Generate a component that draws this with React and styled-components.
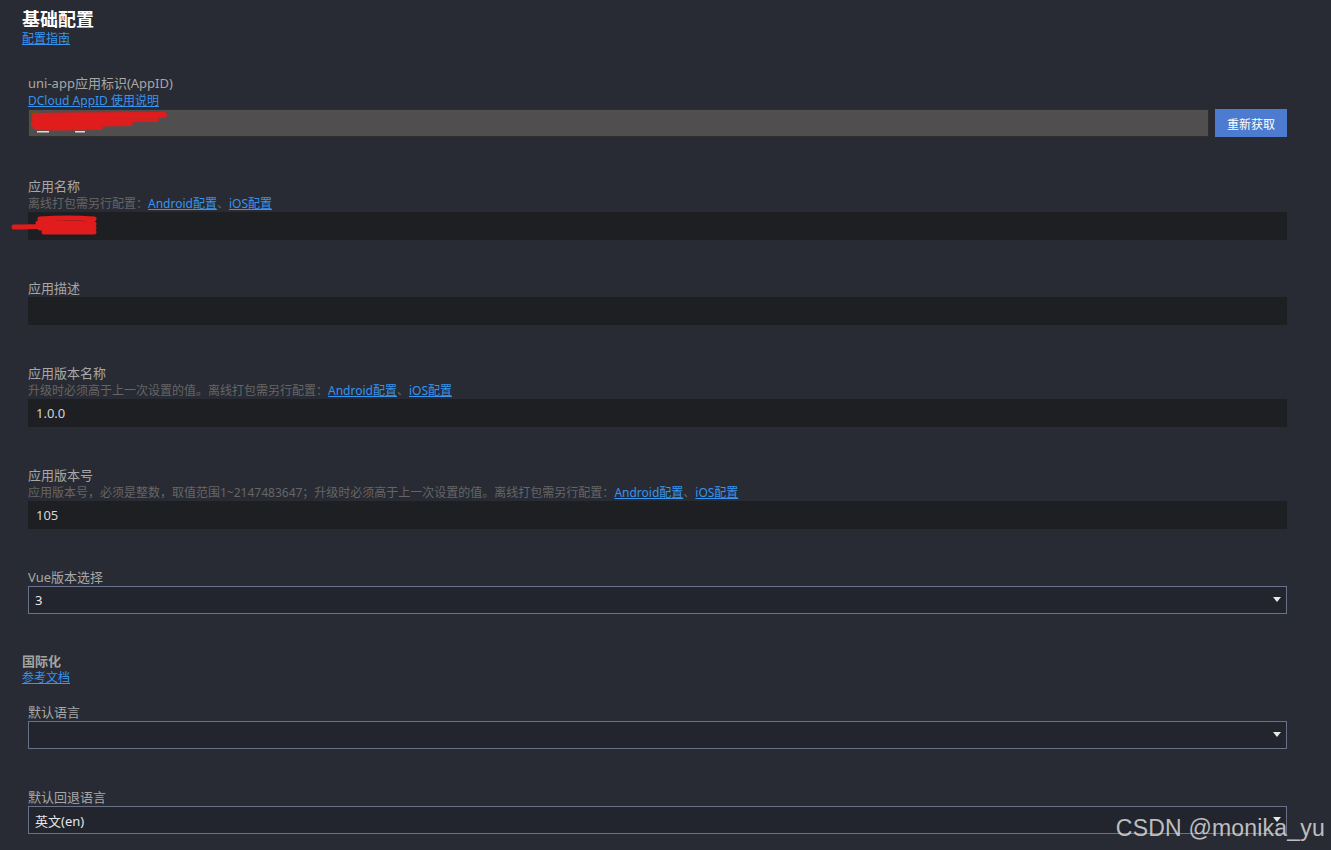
import styled, { createGlobalStyle } from "styled-components";

const GlobalStyle = createGlobalStyle`
  html, body {
    margin: 0;
    padding: 0;
    background: #282b33;
  }
  body {
    font-family: "Noto Sans", "Noto Sans CJK SC", sans-serif;
    overflow: hidden;
  }
`;

const Page = styled.div`
  position: relative;
  min-height: 850px;
  padding: 6px 44px 0 22px;
  box-sizing: border-box;
  background: #282b33;
`;

const SectionHead = styled.div`
  display: flex;
  flex-direction: column;
  align-items: flex-start;
  margin-top: ${(p) => (p.$first ? "0" : "38px")};
  margin-bottom: ${(p) => (p.$first ? "28px" : "18px")};
`;

const Title = styled.h1`
  margin: 0;
  font-family: "Noto Sans CJK SC", sans-serif;
  font-size: ${(p) => (p.$small ? "13px" : "18px")};
  line-height: ${(p) => (p.$small ? "17px" : "24px")};
  font-weight: 700;
  color: ${(p) => (p.$small ? "#a3a3a3" : "#ffffff")};
`;

const Link = styled.a`
  font-size: 12px;
  line-height: 17px;
  color: #3794ef;
  text-decoration: underline;
  cursor: pointer;
`;

const Field = styled.div`
  display: flex;
  flex-direction: column;
  padding-left: 6px;
  padding-bottom: ${(p) => (p.$extra ? "1px" : "0")};
  & + & {
    margin-top: 40px;
  }
`;

const Label = styled.div`
  font-size: 13px;
  line-height: 17px;
  color: #a7a7a7;
`;

const Desc = styled.div`
  font-size: 12px;
  line-height: 17px;
  color: #666666;
  white-space: nowrap;
`;

const Row = styled.div`
  display: flex;
  gap: 6px;
`;

const InputBox = styled.div`
  position: relative;
  flex: 1;
  height: 28px;
  box-sizing: border-box;
  display: flex;
  align-items: center;
  padding-left: 8px;
  font-size: 13px;
  color: #d4d4d4;
  background: ${(p) => (p.$locked ? "#504e4e" : "#1e1f23")};
  border: ${(p) => (p.$locked ? "1px solid #2e2e2e" : "none")};
`;

const Button = styled.button`
  width: 72px;
  height: 28px;
  border: none;
  background: #4d7bd0;
  color: #ffffff;
  font-family: "Noto Sans CJK SC", sans-serif;
  font-size: 12px;
  padding: 0;
`;

const SelectBox = styled.div`
  position: relative;
  height: 28px;
  box-sizing: border-box;
  display: flex;
  align-items: center;
  justify-content: space-between;
  padding: 0 5px 0 6px;
  background: #22252d;
  border: 1px solid #697089;
  font-size: 13px;
  color: #e6e6e6;
`;

const Scribble = styled.svg`
  position: absolute;
  pointer-events: none;
  overflow: visible;
`;

const Watermark = styled.div`
  position: absolute;
  right: 6px;
  bottom: 8px;
  font-family: "Liberation Sans", Arial, sans-serif;
  font-size: 23px;
  color: rgba(225, 225, 225, 0.82);
  letter-spacing: 0.2px;
`;

const Arrow = () => (
  <svg width="8" height="6" viewBox="0 0 8 6">
    <polygon points="0,0 8,0 4,5" fill="#e8e8e8" />
  </svg>
);

const Select = ({ value }) => (
  <SelectBox>
    <span>{value}</span>
    <Arrow />
  </SelectBox>
);

const PackLinks = () => (
  <>
    <Link>Android配置</Link>、<Link>iOS配置</Link>
  </>
);

export default function App() {
  return (
    <>
      <GlobalStyle />
      <Page>
        <SectionHead $first>
          <Title>基础配置</Title>
          <Link>配置指南</Link>
        </SectionHead>

        <Field $extra>
          <Label>uni-app应用标识(AppID)</Label>
          <Desc>
            <Link>DCloud AppID 使用说明</Link>
          </Desc>
          <Row>
            <InputBox $locked>
              <Scribble
                width="140"
                height="22"
                viewBox="0 0 140 22"
                style={{ left: 1, top: 1 }}
              >
                <rect x="2" y="1" width="5" height="11" fill="#5b5b12" />
                <rect x="7" y="20" width="12" height="1.5" fill="#dcdcdc" />
                <rect x="45" y="20" width="10" height="1.5" fill="#dcdcdc" />
                <path
                  d="M5 5 C30 4, 80 4, 134 4 M5 9 C40 9, 90 8, 126 8 M4 13 C30 14, 60 13, 100 12 M6 16 C30 17, 50 16, 70 16"
                  stroke="#e01c1c"
                  strokeWidth="6"
                  fill="none"
                  strokeLinecap="round"
                />
              </Scribble>
            </InputBox>
            <Button>重新获取</Button>
          </Row>
        </Field>

        <Field>
          <Label>应用名称</Label>
          <Desc>
            离线打包需另行配置：<PackLinks />
          </Desc>
          <Row>
            <InputBox>
              <Scribble
                width="90"
                height="22"
                viewBox="0 0 90 22"
                style={{ left: -18, top: 2 }}
              >
                <path
                  d="M4 13 C20 13, 40 12, 60 11 M30 5 C45 4, 70 4, 84 5 M28 9 C50 9, 70 9, 84 10 M30 14 C50 14, 70 14, 84 14 M34 18 C50 18, 70 18, 84 18"
                  stroke="#e01c1c"
                  strokeWidth="5"
                  fill="none"
                  strokeLinecap="round"
                />
              </Scribble>
            </InputBox>
          </Row>
        </Field>

        <Field>
          <Label>应用描述</Label>
          <Row>
            <InputBox />
          </Row>
        </Field>

        <Field>
          <Label>应用版本名称</Label>
          <Desc>
            升级时必须高于上一次设置的值。离线打包需另行配置：<PackLinks />
          </Desc>
          <Row>
            <InputBox>1.0.0</InputBox>
          </Row>
        </Field>

        <Field>
          <Label>应用版本号</Label>
          <Desc>
            应用版本号，必须是整数，取值范围1~2147483647；升级时必须高于上一次设置的值。离线打包需另行配置：
            <PackLinks />
          </Desc>
          <Row>
            <InputBox>105</InputBox>
          </Row>
        </Field>

        <Field>
          <Label>Vue版本选择</Label>
          <Select value="3" />
        </Field>

        <SectionHead>
          <Title $small>国际化</Title>
          <Link>参考文档</Link>
        </SectionHead>

        <Field>
          <Label>默认语言</Label>
          <Select value="" />
        </Field>

        <Field>
          <Label>默认回退语言</Label>
          <Select value="英文(en)" />
        </Field>

        <Watermark>CSDN @monika_yu</Watermark>
      </Page>
    </>
  );
}
